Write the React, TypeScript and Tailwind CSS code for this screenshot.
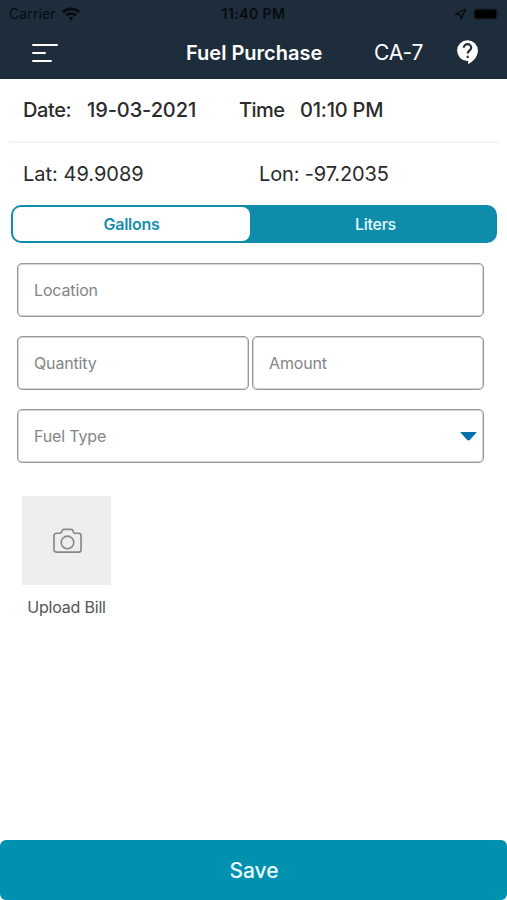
import type { ReactNode } from "react";

function StatusBar() {
  return (
    <div className="grid h-[27px] grid-cols-3 items-center pt-[1px] text-[13px] leading-none text-[#060b10]">
      <div className="flex items-center gap-[6px] pl-[9px]">
        <span className="text-[14px] tracking-[0.1px]">Carrier</span>
        <svg width="18" height="14" viewBox="0 0 18 14" fill="none" stroke="currentColor">
          <path d="M1 5.2a11.3 11.3 0 0 1 16 0" strokeWidth="2.6" />
          <path d="M4 8.5a7.1 7.1 0 0 1 10 0" strokeWidth="2.4" />
          <path d="M9 13.4 6.6 11a3.4 3.4 0 0 1 4.8 0z" fill="currentColor" stroke="none" />
        </svg>
      </div>
      <span className="text-center text-[14px] font-semibold tracking-[0.45px]">11:40 PM</span>
      <div className="flex items-center justify-end gap-[6px] pr-[7px]">
        <svg width="13" height="13" viewBox="0 0 13 13" fill="none" stroke="currentColor" strokeWidth="1.3">
          <path d="M11.4 1.4 1.5 6l4.7.6.7 4.8z" strokeLinejoin="round" />
        </svg>
        <svg width="27" height="12" viewBox="0 0 27 12" fill="currentColor">
          <rect x="0.5" y="0.5" width="24" height="11" rx="3" fill="none" stroke="#15222e" />
          <rect x="1.5" y="1.5" width="22" height="9" rx="2" fill="#000" />
          <path d="M25.5 4.2v3.6c1.2-.6 1.2-3 0-3.6z" fill="#15222e" />
        </svg>
      </div>
    </div>
  );
}

function Header() {
  return (
    <div className="flex h-[52px] items-center pl-[32px] pr-[28px] text-white">
      {/* Menu */}
      <div className="flex w-[154px] flex-col gap-[6px] pb-[1px]">
        <span className="h-[2px] w-[26px] rounded-full bg-white" />
        <span className="h-[2px] w-[14px] rounded-full bg-white" />
        <span className="h-[2px] w-[20px] rounded-full bg-white" />
      </div>
      <h1 className="w-[188px] whitespace-nowrap pb-[1px] text-[20px] font-semibold">Fuel Purchase</h1>
      <span className="text-[21px] tracking-[-0.1px]">CA-7</span>
      <svg className="mb-[2px] ml-auto" width="23" height="26" viewBox="0 0 23 26">
        <path d="M11.5 1.2a10.4 10.4 0 0 0 0 20.8h.7v3.2c5-2.4 9.7-7.6 9.7-13.6A10.4 10.4 0 0 0 11.5 1.2z" fill="#fff" />
        <path
          d="M7.8 8.8a3.7 3.7 0 0 1 7.4 0c0 2.6-3.5 2.7-3.5 5.8M11.7 16.7v2.2"
          fill="none"
          stroke="#1e2d3b"
          strokeWidth="2.1"
        />
      </svg>
    </div>
  );
}

function Field({ label, children }: { label: string; children?: ReactNode }) {
  return (
    <div className="flex h-[54px] flex-1 items-center justify-between rounded-[5px] border border-[#989898] pl-[16px] pr-[6px] text-[16px] tracking-[-0.15px] text-[#858585] shadow-[inset_0_0_0_1px_#d4d4d4]">
      <span>{label}</span>
      {children}
    </div>
  );
}

export default function App() {
  return (
    <div className="flex h-[900px] w-[507px] flex-col overflow-hidden bg-white font-['Inter',sans-serif] text-[#2b2b2b]">
      <header className="h-[79px] bg-[#1e2d3b]">
        <StatusBar />
        <Header />
      </header>

      {/* Date and position */}
      <div className="mr-[8px] ml-[9px] flex h-[64px] items-center border-b-2 border-[#f4f4f4] pl-[14px] text-[20px] font-medium tracking-[-0.2px] whitespace-nowrap">
        <span className="w-[64px] tracking-[-0.4px]">Date:</span>
        <span className="w-[152px] tracking-[-0.1px]">19-03-2021</span>
        <span className="w-[61px] tracking-[-0.5px]">Time</span>
        <span>01:10 PM</span>
      </div>
      <div className="flex h-[62px] items-center pl-[23px] text-[20px]">
        <span className="w-[236px]">Lat: 49.9089</span>
        <span className="tracking-[-0.15px]">Lon: -97.2035</span>
      </div>

      {/* Unit switch */}
      <div className="mr-[10px] ml-[11px] flex h-[38px] shrink-0 rounded-[10px] bg-[#108cab] p-[2px] text-[16px] font-semibold tracking-[-0.3px]">
        <div className="flex w-[237px] items-center justify-center rounded-[8px] bg-white text-[#168eae]">Gallons</div>
        <div className="flex flex-1 items-center justify-center pl-[6px] font-medium text-[#e5faff]">Liters</div>
      </div>

      <div className="mt-[20px] mr-[23px] ml-[17px] flex flex-col gap-[19px]">
        <div className="flex">
          <Field label="Location" />
        </div>
        <div className="flex gap-[3px]">
          <Field label="Quantity" />
          <Field label="Amount" />
        </div>
        <div className="flex">
          <Field label="Fuel Type">
            <svg className="mt-[1px]" width="17" height="9" viewBox="0 0 17 9">
              <path d="M1 0h15q1 0 .3.8L10 7.8Q8.5 9.4 7 7.8L.7.8Q0 0 1 0z" fill="#0871aa" />
            </svg>
          </Field>
        </div>
      </div>

      {/* Bill photo */}
      <div className="mt-[33px] ml-[22px] flex w-[89px] flex-col items-center">
        <div className="flex h-[89px] w-[89px] items-center justify-center bg-[#eeeeee]">
          <svg className="mt-[1px] ml-[1px]" width="29" height="26" viewBox="0 0 30 26" fill="none" stroke="#888" strokeWidth="1.7">
            <path
              d="M3.500 5h3.800c.8 0 1.200-.5 1.500-1.200l.6-1.500c.3-.8.8-1.300 1.700-1.300h7.800c.9 0 1.400.5 1.700 1.300l.6 1.500c.3.7.7 1.200 1.500 1.200h3.800A2.500 2.500 0 0 1 29 7.500v14.500a2.500 2.500 0 0 1-2.500 2.500h-23A2.500 2.500 0 0 1 1 22V7.500A2.500 2.500 0 0 1 3.500 5z"
              strokeLinejoin="round"
            />
            <circle cx="15" cy="14.5" r="6.5" />
          </svg>
        </div>
        <span className="mt-[10px] text-[16px] tracking-[-0.2px] whitespace-nowrap text-[#555]">Upload Bill</span>
      </div>

      <button className="mt-auto h-[60px] shrink-0 rounded-[6px] bg-[#0090b0] pt-[2px] pl-[1px] text-[21px] font-medium tracking-[-0.1px] text-[#e9fcff]">
        Save
      </button>
    </div>
  );
}
